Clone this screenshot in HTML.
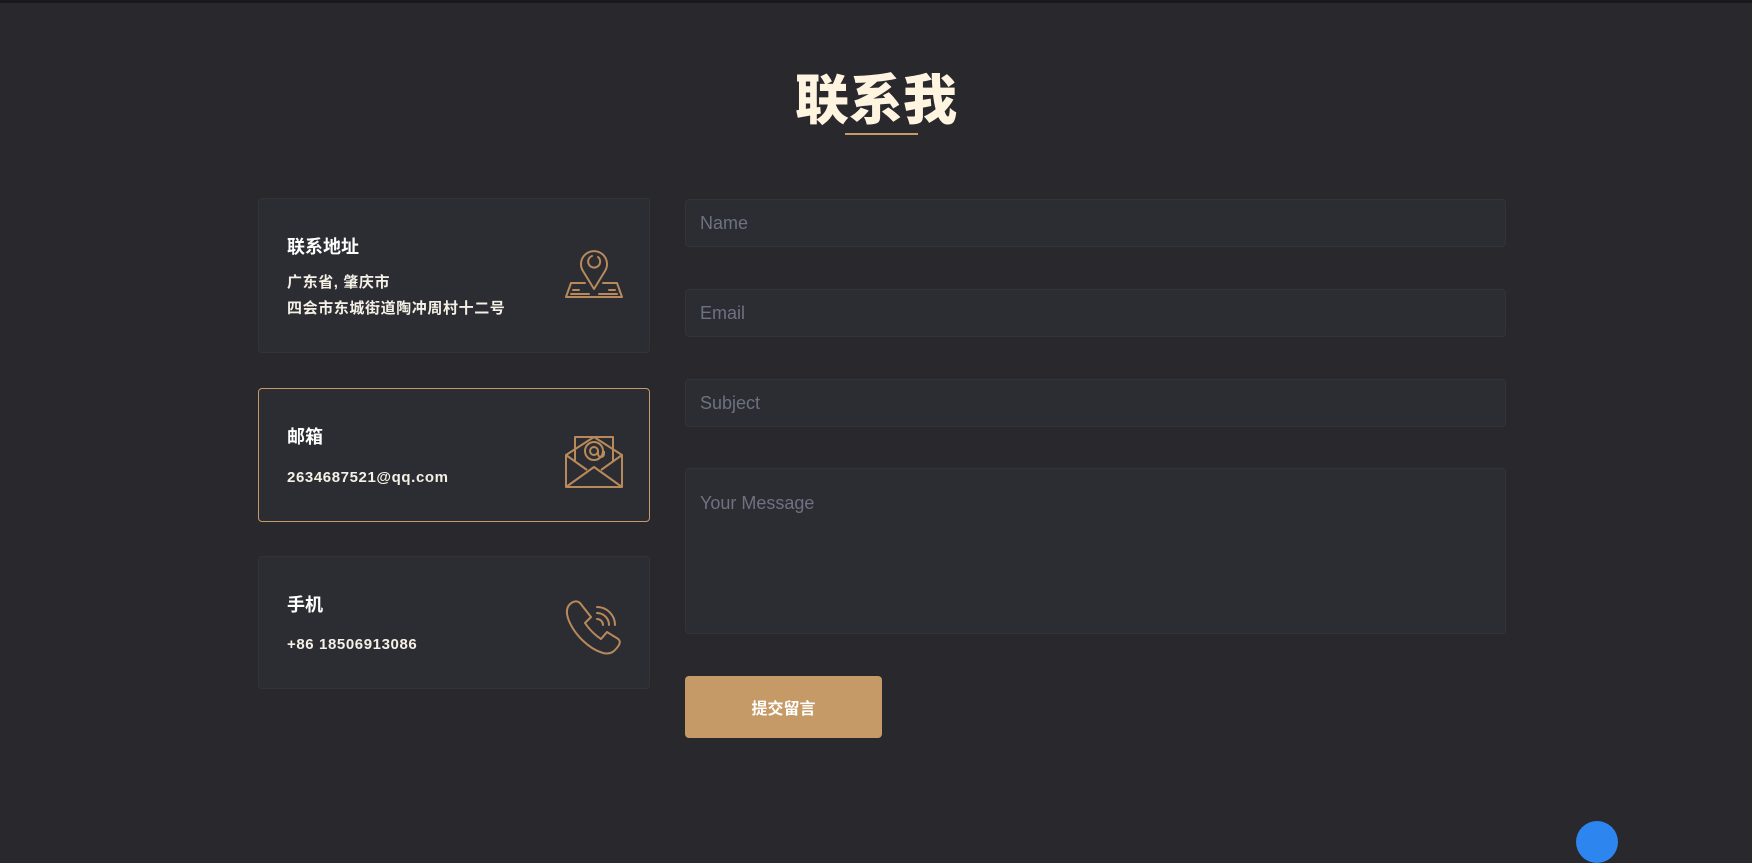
<!DOCTYPE html>
<html><head><meta charset="utf-8"><style>
*{margin:0;padding:0;box-sizing:border-box}
body{width:1752px;height:828px;background:#28282d;overflow:hidden;position:relative;font-family:"Liberation Sans","Noto Sans CJK SC",sans-serif}
.top{position:absolute;left:0;top:0;width:1752px;height:3px;background:#19191b}
h1{position:absolute;left:0;width:1752px;top:61px;text-align:center;color:#fff4e0;font-size:54px;font-weight:900;line-height:70px;font-family:"Noto Sans CJK SC",sans-serif}
.ul{position:absolute;left:845px;top:133px;width:73px;height:2px;background:#c69a66}
.card{position:absolute;left:258px;width:392px;background:#2c2d32;border:1px solid #333439;border-radius:4px}
.card.act{border-color:#c69a66}
.card h3{position:absolute;left:28px;color:#fff;font-size:18px;font-weight:700;font-family:"Noto Sans CJK SC",sans-serif}
.card p{position:absolute;left:28px;color:#f5f0e6;font-size:15px;font-weight:700;line-height:26px;letter-spacing:0.6px;font-family:"Liberation Sans","Noto Sans CJK SC",sans-serif}
.card svg{position:absolute;left:306px}
.in{position:absolute;left:685px;width:821px;background:#2c2d32;border:1px solid #333439;border-radius:4px;color:#6c7280;font-size:18px;padding-left:14px;line-height:46px}
.btn{position:absolute;left:685px;top:676px;width:197px;height:62px;background:#c69a66;border-radius:4px;color:#fff;font-size:16px;font-weight:700;text-align:center;line-height:62px;font-family:"Noto Sans CJK SC",sans-serif}
.dot{position:absolute;left:1576px;top:821px;width:42px;height:42px;border-radius:50%;background:#2d85f0}
</style></head><body>
<div class="top"></div>
<h1>联系我</h1>
<div class="ul"></div>

<div class="card" style="top:198px;height:155px">
<h3 style="top:34px">联系地址</h3>
<p style="top:71px">广东省, 肇庆市<br>四会市东城街道陶冲周村十二号</p>
<svg style="top:44px" width="58" height="58" viewBox="0 0 58 58" fill="none" stroke="#b8895a" stroke-width="2" stroke-linecap="round" stroke-linejoin="round">
<path d="M29 46 L18 28 A13 13 0 1 1 40 28 Z"/><path d="M33 14 A6 6 0 1 1 27 13"/>
<path d="M20 40 L6 40 L1 54 L57 54 L52 40 L38 40"/><path d="M8 47h6M44 47h6M6 51h18M34 51h18"/>
</svg>
</div>

<div class="card act" style="top:388px;height:134px">
<h3 style="top:34px">邮箱</h3>
<p style="top:76px">2634687521@qq.com</p>
<svg style="top:43px" width="58" height="58" viewBox="0 0 58 58" fill="none" stroke="#b8895a" stroke-width="2" stroke-linejoin="round">
<path d="M1 23 L1 55 L57 55 L57 23 L29 5 Z"/><path d="M1 55 L29 35 L57 55"/><path d="M1 23 L22 38 M57 23 L36 38"/>
<path d="M10 29 L10 5 L48 5 L48 29"/><circle cx="29" cy="19" r="9"/><circle cx="29" cy="19" r="4"/><path d="M33 19v3a3 3 0 0 0 6 0v-3"/>
</svg>
</div>

<div class="card" style="top:556px;height:133px">
<h3 style="top:34px">手机</h3>
<p style="top:75px">+86 18506913086</p>
<svg style="top:42px" width="58" height="58" viewBox="0 0 58 58" fill="none" stroke="#b8895a" stroke-width="2" stroke-linejoin="round" stroke-linecap="round">
<path d="M8 3 C2 6 0 12 4 22 C10 36 24 50 38 54 C46 56 50 52 54 46 C56 42 54 40 50 38 L42 33 L36 40 C30 36 24 30 20 24 L26 18 L15 4 C13 2 10 2 8 3 Z"/>
<path d="M32 14 A12 12 0 0 1 44 26"/><path d="M32 8 A18 18 0 0 1 50 26"/><path d="M32 20 A6 6 0 0 1 38 26"/>
</svg>
</div>

<div class="in" style="top:199px;height:48px">Name</div>
<div class="in" style="top:289px;height:48px">Email</div>
<div class="in" style="top:379px;height:48px">Subject</div>
<div class="in" style="top:468px;height:166px;line-height:68px">Your Message</div>
<div class="btn">提交留言</div>
<div class="dot"></div>
</body></html>
